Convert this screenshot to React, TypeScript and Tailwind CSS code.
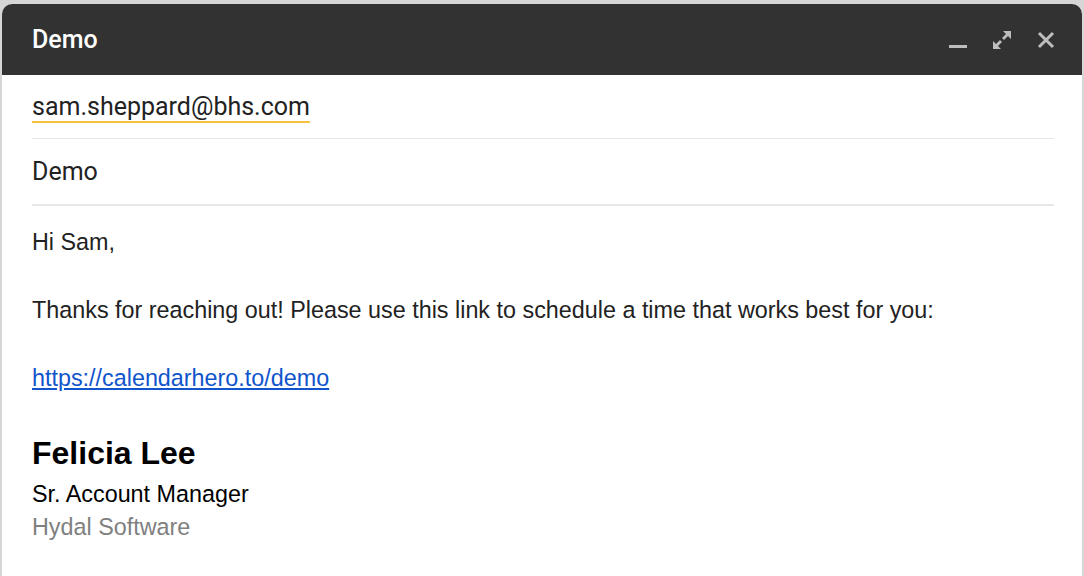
export default function App() {
  return (
    <div className="w-[1084px] h-[576px] bg-[#d6d6d6] pt-1 pl-[2px] pr-[2px] overflow-hidden">
      <div className="h-full bg-white rounded-t-[10px] overflow-hidden flex flex-col">
        <div className="h-[71px] shrink-0 bg-[#323232] flex items-center justify-between pl-[30px] pr-[26px]">
          <span
            className="text-white text-[25px] font-medium"
            style={{ fontFamily: "Roboto, 'Noto Sans', sans-serif" }}
          >
            Demo
          </span>
          <div className="flex items-center gap-[24px] text-[#bdbdbd]">
            <svg width="20" height="20" viewBox="0 0 20 20">
              <rect x="1" y="15" width="18" height="3" fill="currentColor" />
            </svg>
            <svg width="20" height="20" viewBox="0 0 20 20" fill="currentColor">
              <path d="M11 1h8v8l-3-3-4 4-2-2 4-4z" />
              <path d="M9 19H1v-8l3 3 4-4 2 2-4 4z" />
            </svg>
            <svg width="20" height="20" viewBox="0 0 20 20">
              <path d="M3 3L17 17M17 3L3 17" stroke="currentColor" strokeWidth="3" />
            </svg>
          </div>
        </div>
        <div className="px-[30px] pr-[28px]" style={{ fontFamily: "Roboto, 'Noto Sans', sans-serif" }}>
          <div className="pt-[18px] h-[64px] border-b border-[#e5e7ea]">
            <span className="inline-block text-[25px] text-[#222] leading-[28px] border-b-2 border-[#f6c143]">
              sam.sheppard@bhs.com
            </span>
          </div>
          <div className="h-[67px] flex items-center border-b-2 border-[#e5e7ea] text-[25px] text-[#222]">
            Demo
          </div>
        </div>
        <div
          className="px-[30px] pt-[19px] text-[23.35px] text-[#222] leading-[34px]"
          style={{ fontFamily: "'Liberation Sans', Arial, sans-serif" }}
        >
          <p>Hi Sam,</p>
          <p className="mt-[34px]">
            Thanks for reaching out! Please use this link to schedule a time that works best for you:
          </p>
          <p className="mt-[34px]">
            <a href="#" className="text-[#1155cc] underline">
              https://calendarhero.to/demo
            </a>
          </p>
          <p className="mt-[40px] text-[32px] font-bold text-black leading-[36px]">Felicia Lee</p>
          <p className="mt-[8px] text-black leading-[30px]">Sr. Account Manager</p>
          <p className="mt-[1px] text-[#808080] leading-[34px]">Hydal Software</p>
        </div>
      </div>
    </div>
  );
}
